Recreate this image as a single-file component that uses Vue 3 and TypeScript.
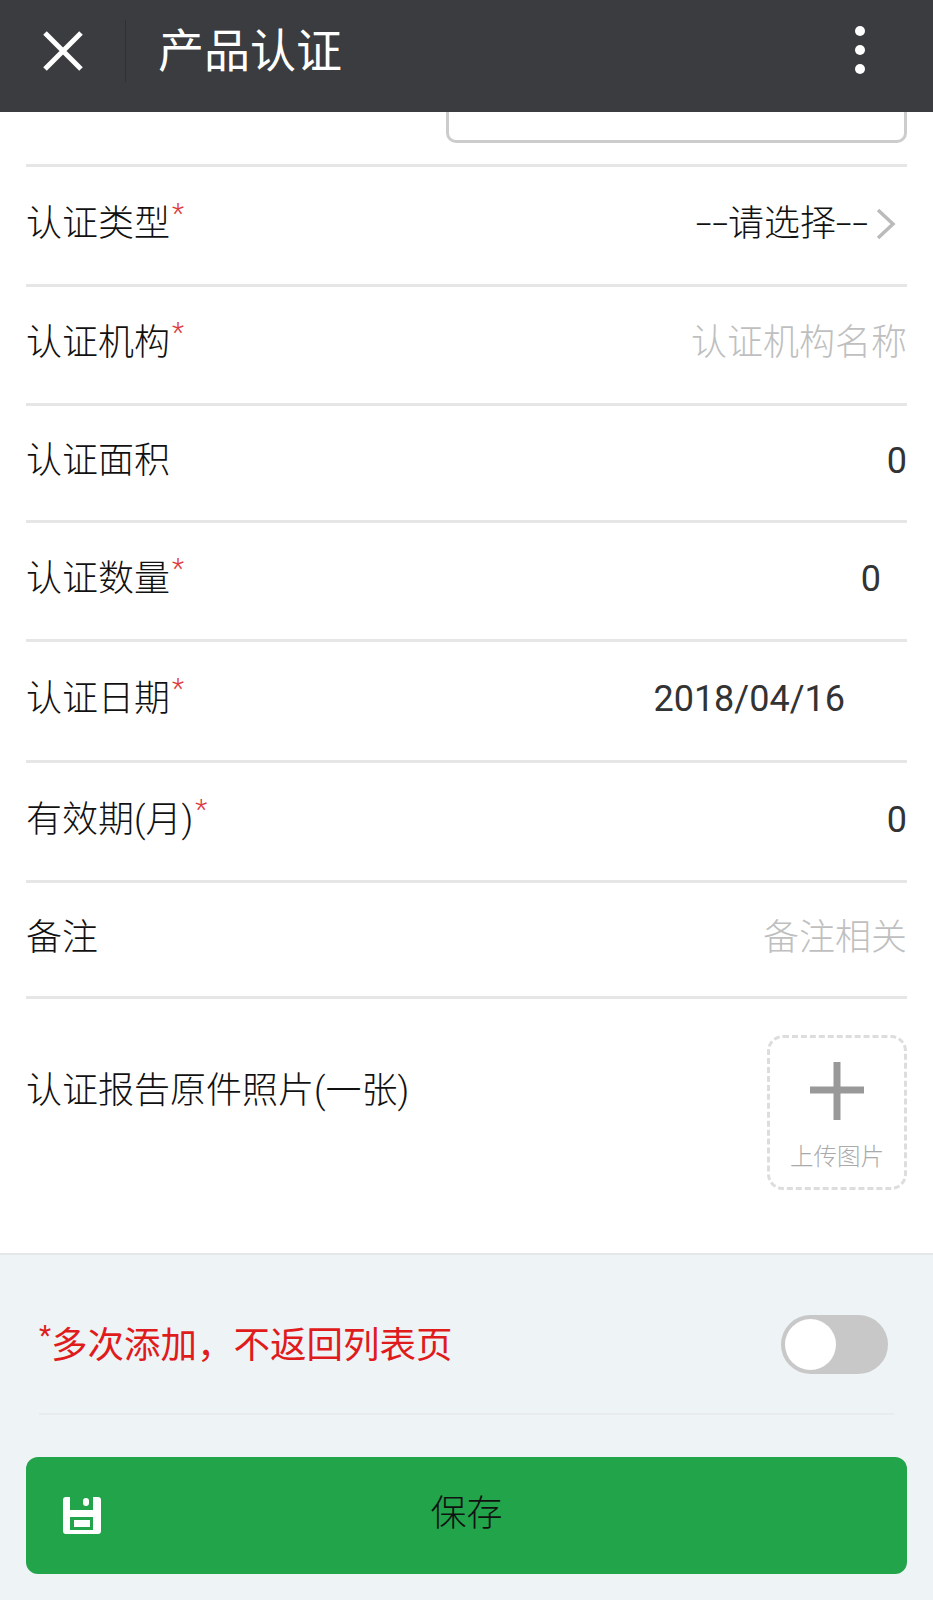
<template>
  <div class="page">
    <header class="app-bar">
      <button class="close-btn" type="button" aria-label="关闭">
        <svg width="40" height="40" viewBox="0 0 40 40">
          <path d="M2 2 L38 38 M38 2 L2 38" stroke="#fff" stroke-width="5" fill="none" />
        </svg>
      </button>
      <span class="bar-divider"></span>
      <h1 class="bar-title">产品认证</h1>
      <div class="more-btn">
        <i></i>
        <i></i>
        <i></i>
      </div>
    </header>

    <main class="form">
      <div class="top-row">
        <div class="text-box"></div>
      </div>

      <div
        v-for="row in rows"
        :key="row.label"
        class="form-row"
        :style="{ height: row.height + 'px' }"
      >
        <span class="label">{{ row.label }}<sup v-if="row.required" class="star">*</sup></span>
        <span v-if="row.kind === 'select'" class="value select">
          <span class="dash">--</span>{{ row.value }}<span class="dash">--</span>
          <svg class="chevron" width="20" height="32" viewBox="0 0 20 32">
            <path d="M2 2 L17 16 L2 30" stroke="#bbb" stroke-width="3.5" fill="none" />
          </svg>
        </span>
        <span v-else class="value" :class="row.kind">{{ row.value }}</span>
      </div>

      <div class="upload-row">
        <span class="label upload-label">认证报告原件照片(一张)</span>
        <div class="upload-box">
          <svg width="54" height="58" viewBox="0 0 54 58">
            <path d="M27 0 V58 M0 28 H54" stroke="#999" stroke-width="7" fill="none" />
          </svg>
          <span class="upload-text">上传图片</span>
        </div>
      </div>
    </main>

    <footer class="footer">
      <div class="repeat-row">
        <span class="repeat-text"><sup class="repeat-star">*</sup>多次添加，不返回列表页</span>
        <div class="toggle">
          <span class="knob"></span>
        </div>
      </div>
      <button class="save-btn" type="button">
        <svg class="save-icon" width="38" height="37" viewBox="0 0 38 37">
          <path
            fill="#fff"
            fill-rule="evenodd"
            d="M3 0 H35 Q38 0 38 3 V34 Q38 37 35 37 H3 Q0 37 0 34 V3 Q0 0 3 0 Z M7 0 V13 H30 V0 Z M7 20 V33 H30 V20 Z"
          />
          <rect x="20" y="1" width="6" height="8" rx="3" fill="#fff" />
          <rect x="11" y="23" width="16" height="7" fill="#fff" />
        </svg>
        <span>保存</span>
      </button>
    </footer>
  </div>
</template>

<script setup lang="ts">
interface Row {
  label: string
  value: string
  required: boolean
  height: number
  kind: string
}

const rows: Row[] = [
  { label: '认证类型', value: '请选择', required: true, height: 120, kind: 'select' },
  { label: '认证机构', value: '认证机构名称', required: true, height: 119, kind: 'placeholder' },
  { label: '认证面积', value: '0', required: false, height: 117, kind: 'plain' },
  { label: '认证数量', value: '0', required: true, height: 119, kind: 'qty' },
  { label: '认证日期', value: '2018/04/16', required: true, height: 121, kind: 'date' },
  { label: '有效期(月)', value: '0', required: true, height: 120, kind: 'plain' },
  { label: '备注', value: '备注相关', required: false, height: 116, kind: 'placeholder' }
]
</script>

<style>
body {
  margin: 0;
  background: #fff;
}
</style>

<style scoped>
.page {
  width: 933px;
  height: 1600px;
  display: flex;
  flex-direction: column;
  overflow: hidden;
  font-family: Roboto, "Noto Sans CJK SC", sans-serif;
  font-weight: 300;
  color: #111;
}

.app-bar {
  height: 112px;
  flex: none;
  box-sizing: border-box;
  padding-bottom: 11px;
  display: flex;
  align-items: center;
  background: #3a3c3f;
  color: #fff;
}

.close-btn {
  width: 40px;
  height: 40px;
  margin-left: 43px;
  padding: 0;
  border: 0;
  background: none;
}

.bar-divider {
  width: 1px;
  height: 62px;
  margin-left: 42px;
  background: #2f3033;
}

.bar-title {
  margin: 0 0 0 32px;
  font-size: 46px;
  font-weight: 400;
  line-height: 1;
}

.more-btn {
  margin-left: auto;
  margin-right: 68px;
  margin-top: -1px;
  display: flex;
  flex-direction: column;
  gap: 9px;
}

.more-btn i {
  display: block;
  width: 10px;
  height: 10px;
  border-radius: 50%;
  background: #fff;
}

.form {
  flex: 1;
  padding: 0 26px;
}

.top-row {
  height: 52px;
  display: flex;
  justify-content: flex-end;
  border-bottom: 3px solid #e6e6e6;
  box-sizing: content-box;
}

.text-box {
  width: 461px;
  height: 31px;
  box-sizing: border-box;
  border: 3px solid #ccc;
  border-top: 0;
  border-radius: 0 0 10px 10px;
}

.form-row {
  display: flex;
  align-items: center;
  justify-content: space-between;
  box-sizing: border-box;
  padding-bottom: 4px;
  border-bottom: 3px solid #e6e6e6;
}

.label {
  font-size: 36px;
  line-height: 44px;
}

.star {
  margin-left: 2px;
  color: #db3a40;
  font-size: 28px;
  line-height: 0;
}

.value {
  display: flex;
  align-items: center;
  font-size: 36px;
  line-height: 44px;
}

.value.plain,
.value.qty,
.value.date {
  font-weight: 400;
  color: #333;
}

.value.placeholder {
  color: #bfbfbf;
}

.value.qty {
  padding-right: 26px;
}

.value.date {
  padding-right: 62px;
}

.value.select {
  padding-right: 11px;
}

.dash {
  display: inline-block;
  width: 32px;
  text-align: center;
  transform: scaleX(1.6);
}

.chevron {
  margin-left: 8px;
  margin-top: 0;
}

.upload-row {
  display: flex;
  align-items: flex-start;
  justify-content: space-between;
  padding-top: 36px;
}

.upload-label {
  margin-top: 34px;
}

.upload-box {
  width: 140px;
  height: 155px;
  box-sizing: border-box;
  display: flex;
  flex-direction: column;
  align-items: center;
  padding-top: 24px;
  border: 3px dashed #ddd;
  border-radius: 16px;
}

.upload-text {
  margin-top: 23px;
  font-size: 23.5px;
  line-height: 28px;
  color: #aaa;
}

.footer {
  height: 347px;
  flex: none;
  box-sizing: border-box;
  padding: 0 26px;
  background: #eef3f6;
  border-top: 2px solid #e4e6e8;
}

.repeat-row {
  height: 160px;
  margin: 0 13px;
  display: flex;
  align-items: center;
  justify-content: space-between;
  padding-top: 20px;
  box-sizing: border-box;
  border-bottom: 2px solid #e8ecef;
}

.repeat-text {
  padding-bottom: 4px;
  font-size: 36.5px;
  font-weight: 400;
  color: #e01b1b;
}

.repeat-star {
  font-size: 28px;
  line-height: 0;
}

.toggle {
  width: 107px;
  height: 59px;
  margin-right: 6px;
  box-sizing: border-box;
  border: 4px solid #c8c8c8;
  border-radius: 30px;
  background: #c8c8c8;
}

.knob {
  display: block;
  width: 51px;
  height: 51px;
  border-radius: 50%;
  background: #fff;
}

.save-btn {
  position: relative;
  display: block;
  width: 881px;
  height: 117px;
  margin-top: 42px;
  padding: 0 0 12px;
  border: 0;
  border-radius: 12px;
  background: #22a54a;
  color: #111;
  font: inherit;
  font-size: 36px;
}

.save-icon {
  position: absolute;
  left: 37px;
  top: 40px;
}
</style>
